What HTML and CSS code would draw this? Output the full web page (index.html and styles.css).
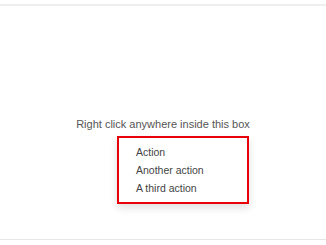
FILE: index.html
```html
<!DOCTYPE html>
<html>
 <head>
  <title>Context menu</title>
  <link rel="stylesheet" href="styles.css">
 </head>
 <body>
  <div class="box">
   <p class="hint">Right click anywhere inside this box</p>
   <ul class="context-menu">
    <li>Action</li>
    <li>Another action</li>
    <li>A third action</li>
   </ul>
  </div>
 </body>
</html>
```

FILE: styles.css
```css
html, body { margin: 0; padding: 0; background: #fff; }
body { font-family: "Liberation Sans", Arial, sans-serif; }
.box
{
 position: relative;
 margin-top: 4px;
 height: 233px;
 border-top: 2px solid #eeeeee;
 border-bottom: 1px solid #e6e6e6;
}
.hint
{
 margin: 0;
 padding-top: 111px;
 text-align: center;
 font-size: 11px;
 line-height: 14px;
 color: #555;
}
.context-menu
{
 position: absolute;
 left: 117px;
 top: 130px;
 width: 111px;
 margin: 0;
 padding: 5px 0 5px 17px;
 list-style: none;
 border: 2.5px solid #e8000b;
 box-shadow: 0 4px 8px rgba(0,0,0,0.12);
 background: #fff;
}
.context-menu li
{
 font-size: 10.5px;
 line-height: 18px;
 color: #444;
}
```
